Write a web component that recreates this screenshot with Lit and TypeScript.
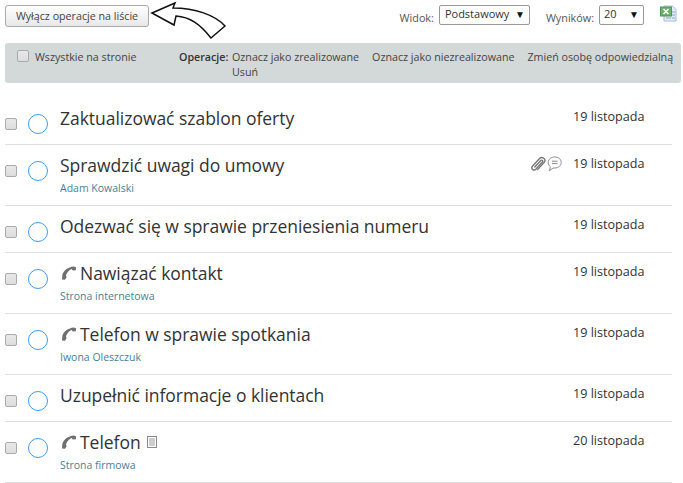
import { LitElement, html, css, nothing } from "lit";
import { customElement } from "lit/decorators.js";

const phone = html`<svg class="phone" viewBox="0 0 16 14" width="16" height="14"><path d="M1 13.6 L1.4 8.4 C3 4 7 1 13 0.4 L15.2 1.6 L14.8 4.2 L11.8 4.6 L10.6 3 C8 4 6 6.5 5 9.2 L5.6 11.2 L4 13.8 Z" fill="#6f6f6f"/></svg>`;
const clip = html`<svg class="ic" viewBox="0 0 16 17" width="16" height="17"><path d="M4.8 11 L10.8 4.5 C11.9 3.4 13.5 5 12.4 6.1 L5.8 13.2 C3.6 15.4 0.4 12.6 2.6 10 L9.6 2.5 C12.2 -0.2 16.6 3.4 14.2 6.4 L7.8 13.4" fill="none" stroke="#777" stroke-width="1.4" stroke-linecap="round"/></svg>`;
const bubble = html`<svg class="ic" viewBox="0 0 15 16" width="15" height="16"><path d="M7.8 1 C11.4 1 14.2 3.2 14.2 6.4 C14.2 9.6 11.4 12 7.8 12 L6 12 L2.4 14.8 L3.4 10.8 C2 9.8 1.2 8.2 1.2 6.4 C1.2 3.2 4.2 1 7.8 1 Z" fill="none" stroke="#8a8a8a" stroke-width="1"/><path d="M5 5.2H10.6M5 7.6H10.6" stroke="#8a8a8a" stroke-width="1"/></svg>`;
const note = html`<svg class="note" viewBox="0 0 10 12" width="10" height="12"><rect x="0.5" y="0.5" width="9" height="11" fill="#fff" stroke="#888"/><path d="M2 3H8M2 5H8M2 7H8M2 9H8" stroke="#999"/></svg>`;

type Row = { title: string; sub?: string; date: string; call?: boolean; icons?: boolean; note?: boolean };
const rows: Row[] = [
  { title: "Zaktualizować szablon oferty", date: "19 listopada" },
  { title: "Sprawdzić uwagi do umowy", sub: "Adam Kowalski", date: "19 listopada", icons: true },
  { title: "Odezwać się w sprawie przeniesienia numeru", date: "19 listopada" },
  { title: "Nawiązać kontakt", sub: "Strona internetowa", date: "19 listopada", call: true },
  { title: "Telefon w sprawie spotkania", sub: "Iwona Oleszczuk", date: "19 listopada", call: true },
  { title: "Uzupełnić informacje o klientach", date: "19 listopada" },
  { title: "Telefon", sub: "Strona firmowa", date: "20 listopada", call: true, note: true },
];

@customElement("app-root")
export class AppRoot extends LitElement {
  static styles = css`
    :host { display: block; width: 683px; height: 483px; overflow: hidden; background: #fff; font-family: "Open Sans", "Noto Sans", sans-serif; color: #333; font-size: 11px; }
    .top { display: flex; align-items: flex-start; height: 43px; padding: 5px 0 0 5px; box-sizing: border-box; }
    .btn { width: 144px; height: 22px; box-sizing: border-box; border: 1px solid #aaa; border-radius: 3px; background: linear-gradient(#fff, #e8e8e8); color: #444; font: inherit; font-size: 10.7px; padding: 0; text-align: center; }
    .arrow { margin: -5px 0 0 1px; flex: none; }
    .right { display: flex; align-items: flex-start; margin-left: auto; }
    .lab { font-size: 10.8px; color: #555; margin-top: 5px; }
    .sel { box-sizing: border-box; height: 20px; border: 1px solid #999; border-radius: 2px; background: #fff; display: flex; justify-content: space-between; align-items: center; padding: 0 4px 3px 5px; font-size: 11px; color: #333; margin-left: 5px; }
    .sel i { font-style: normal; font-size: 10px; color: #111; }
    .s1 { width: 91px; margin-right: 16px; }
    .s2 { width: 45px; margin-right: 16px; padding-left: 4px; }
    .xls { margin-right: 6px; flex: none; }
    .bar { margin: 0 2px 0 5px; height: 40px; box-sizing: border-box; background: #d3d8d8; border-radius: 3px; display: flex; padding: 7px 0 0 12px; line-height: 15px; color: #444; font-size: 10.7px; }
    .cb { box-sizing: border-box; width: 12px; height: 12px; border: 1px solid #aaa; border-radius: 2px; background: linear-gradient(#e8e8e8, #ddd); flex: none; }
    .all { display: flex; gap: 6px; width: 162px; flex: none; }
    .op { font-weight: 600; color: #333; width: 53px; flex: none; }
    .acts { display: flex; flex-wrap: wrap; align-content: flex-start; column-gap: 13px; width: 450px; white-space: nowrap; }
    .acts span:last-child { flex-basis: 100%; }
    .list { margin: 15px 11px 0 5px; }
    .row { display: flex; border-bottom: 1px solid #e0e0e0; height: 47px; box-sizing: border-box; }
    .row.sub { height: 61px; }
    .row .cb { margin: 20px 0 0 0; }
    .ring { box-sizing: border-box; width: 20px; height: 20px; border: 1.5px solid #3d9bf5; border-radius: 50%; margin: 16px 12px 0 11px; flex: none; }
    .main { flex: 1; padding-top: 7px; min-width: 0; }
    .t { display: flex; align-items: center; font-size: 17.5px; line-height: 26px; color: #333; white-space: nowrap; letter-spacing: -.03px; }
    .phone { margin: 0 3px 0 1px; flex: none; }
    .note { margin-left: 6px; flex: none; }
    .s { font-size: 10.5px; line-height: 14px; color: #4a7f9a; margin-top: 3px; }
    .icons { display: flex; align-items: flex-start; gap: 1px; padding: 11px 11px 0 0; height: 17px; }
    .date { width: 99px; padding-top: 10px; font-size: 12.6px; line-height: 18px; color: #333; flex: none; }
  `;

  render() {
    return html`
      <div class="top">
        <button class="btn">Wyłącz operacje na liście</button>
        <svg class="arrow" width="78" height="40" viewBox="0 0 78 40"><path d="M2 13 L25 3 L23 8 C45 8 65 15 75 26 L61 38 C50 24 40 17 26 16 L24 25 Z" fill="#fff" stroke="#111" stroke-width="1.5"/></svg>
        <div class="right">
          <span class="lab">Widok:</span><div class="sel s1">Podstawowy<i>▼</i></div>
          <span class="lab">Wyników:</span><div class="sel s2">20<i>▼</i></div>
          <svg class="xls" width="17" height="17" viewBox="0 0 17 17"><path d="M4 1H12.5L16 4.5V16H4Z" fill="#e4ecf7" stroke="#a8bcd8"/><rect x="0.5" y="2" width="11" height="9" fill="#6fb06f" stroke="#4f9558"/><path d="M3.5 4L8.5 9M8.5 4L3.5 9" stroke="#fff" stroke-width="1.4"/><path d="M12 7H15M12 10H15M12 13H15M6 13H11" stroke="#8aa6cc"/></svg>
        </div>
      </div>
      <div class="bar">
        <div class="all"><span class="cb"></span><span>Wszystkie na stronie</span></div>
        <span class="op">Operacje:</span>
        <div class="acts"><span>Oznacz jako zrealizowane</span><span>Oznacz jako niezrealizowane</span><span>Zmień osobę odpowiedzialną</span><span>Usuń</span></div>
      </div>
      <div class="list">
        ${rows.map((r) => html`
          <div class="row ${r.sub ? "sub" : ""}">
            <span class="cb"></span><span class="ring"></span>
            <div class="main">
              <div class="t">${r.call ? phone : nothing}${r.title}${r.note ? note : nothing}</div>
              ${r.sub ? html`<div class="s">${r.sub}</div>` : nothing}
            </div>
            ${r.icons ? html`<div class="icons">${clip}${bubble}</div>` : nothing}
            <div class="date">${r.date}</div>
          </div>`)}
      </div>
    `;
  }
}
